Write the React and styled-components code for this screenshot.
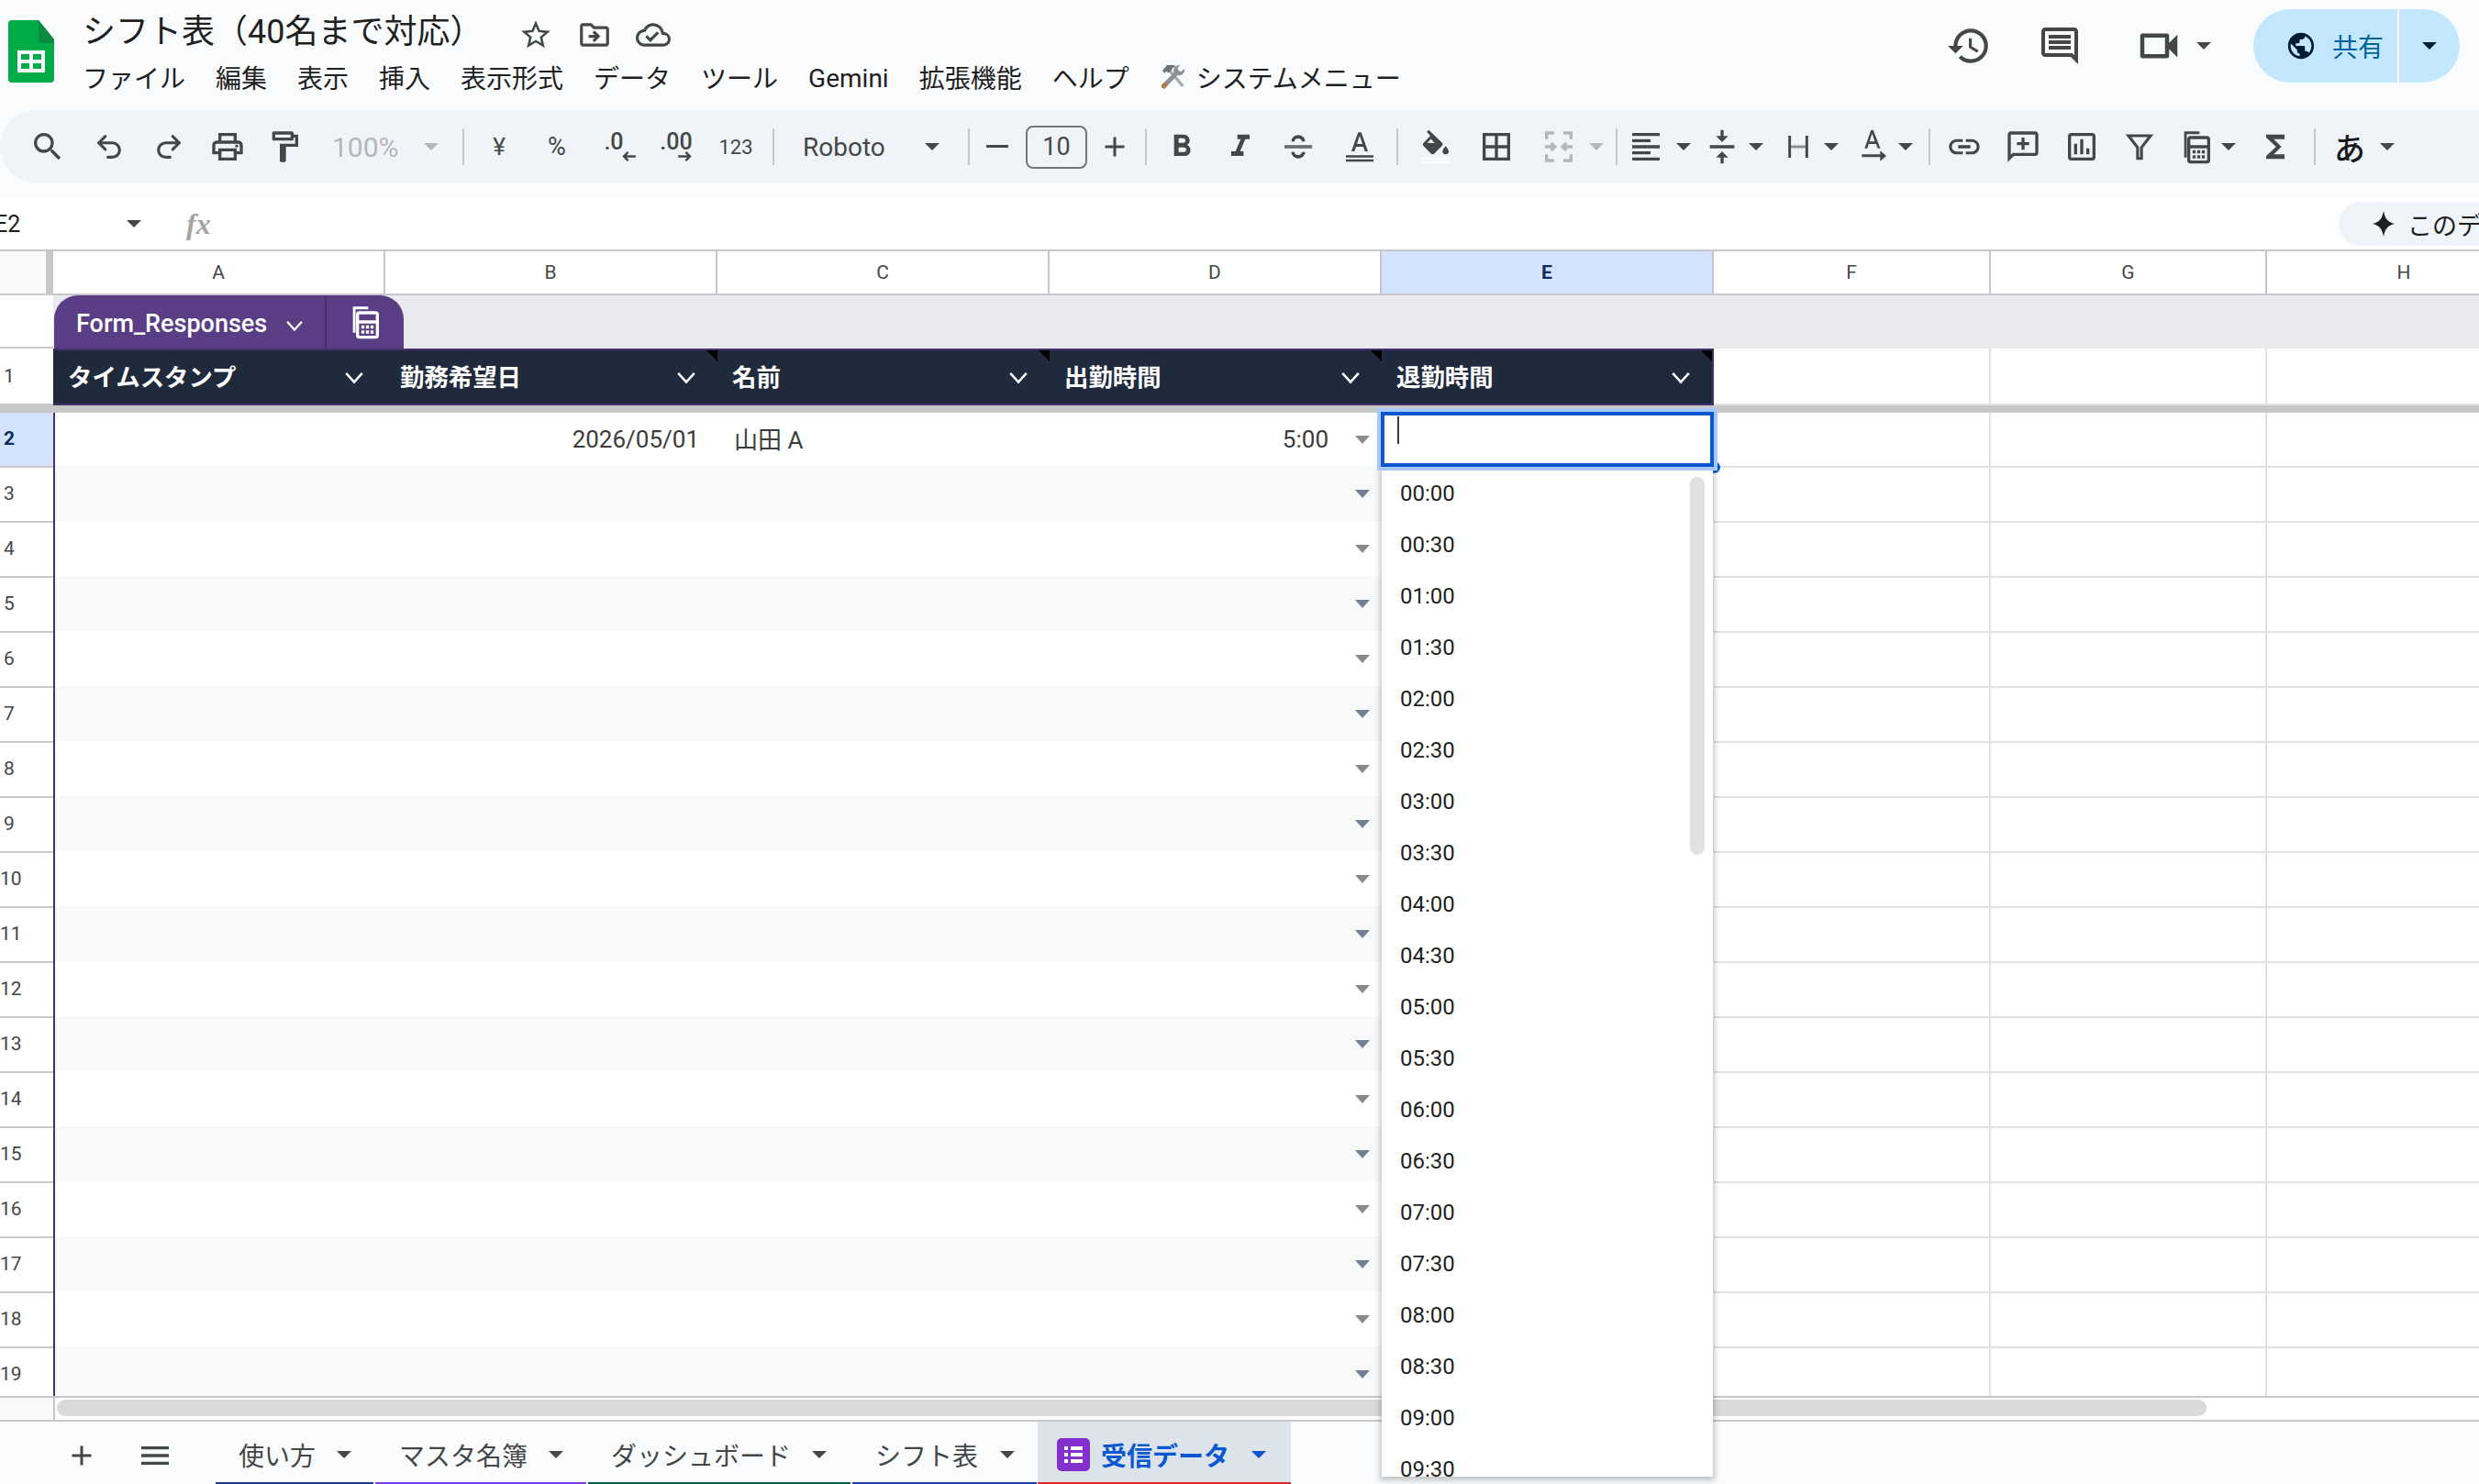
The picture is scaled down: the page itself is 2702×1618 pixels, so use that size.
import React from 'react';
import styled, { createGlobalStyle } from 'styled-components';
import { Undo2, Redo2 } from 'lucide-react';
import {
  MdSearch, MdOutlinePrint, MdOutlineFormatPaint, MdStarBorder, MdOutlineDriveFileMove,
  MdOutlineCloudDone, MdHistory, MdOutlineVideocam, MdPublic, MdFormatBold, MdFormatItalic,
  MdBorderAll, MdFormatAlignLeft, MdVerticalAlignCenter, MdLink, MdOutlineInsertChart, MdFunctions, MdAdd, MdMenu,
} from 'react-icons/md';

const FONT = `Roboto, "Noto Sans CJK JP", sans-serif`;

const Global = createGlobalStyle`
  html, body { margin: 0; padding: 0; background: #fff; }
  body { font-family: ${FONT}; color: #1f1f1f; }
  * { box-sizing: border-box; }
`;

const Page = styled.div`
  position: relative;
  width: 2702px;
  height: 1618px;
  overflow: hidden;
  background: #fff;
`;

/* ---------- top chrome ---------- */
const Chrome = styled.header`
  background: #f9fbfd;
  height: 216px;
`;
const TopBar = styled.div`
  display: flex;
  height: 120px;
  padding: 0 21px 0 9px;
`;
const Logo = styled.svg`
  width: 50px;
  height: 68px;
  margin-top: 22px;
  flex-shrink: 0;
`;
const Titles = styled.div`
  margin-left: 31px;
  padding-top: 13px;
`;
const TitleRow = styled.div`
  display: flex;
  align-items: center;
  height: 44px;
`;
const DocTitle = styled.div`
  width: 462px;
  font-size: 36px;
  line-height: 44px;
  color: #1f1f1f;
  white-space: nowrap;
`;
const TitleIcon = styled.div`
  width: 64px;
  display: flex;
  justify-content: center;
  align-items: center;
  color: #444746;
  margin-top: 5px;
`;
const MenuBar = styled.nav`
  display: flex;
  gap: 33px;
  margin-top: 5px;
  height: 44px;
  align-items: center;
`;
const MenuItem = styled.span`
  font-size: 28px;
  color: #1f1f1f;
  white-space: nowrap;
  display: flex;
  align-items: center;
  gap: 12px;
  padding-top: ${p => (p.$latin ? 3 : 0)}px;
`;
const Actions = styled.div`
  margin-left: auto;
  display: flex;
  align-items: center;
  height: 80px;
  margin-top: 10px;
`;
const ActionBtn = styled.div`
  width: ${p => p.$w}px;
  margin-right: ${p => p.$mr}px;
  display: flex;
  justify-content: center;
  align-items: center;
  color: #444746;
`;
const Share = styled.div`
  display: flex;
  align-items: center;
  width: 225px;
  height: 80px;
  border-radius: 40px;
  background: #c2e7ff;
  color: #001d35;
`;
const ShareMain = styled.div`
  display: flex;
  align-items: center;
  width: 159px;
  height: 100%;
  padding-left: 35px;
  gap: 17px;
  border-right: 2px solid #f9fbfd;
`;
const ShareLabel = styled.span`
  font-size: 28px;
  color: #00639b;
`;
const ShareCaret = styled.div`
  flex: 1;
  display: flex;
  justify-content: center;
`;

const Caret = styled.i`
  display: block;
  flex-shrink: 0;
  width: 0;
  height: 0;
  border-left: ${p => p.$s || 8}px solid transparent;
  border-right: ${p => p.$s || 8}px solid transparent;
  border-top: ${p => p.$s || 8}px solid ${p => p.$c || '#444746'};
`;

/* ---------- toolbar ---------- */
const Toolbar = styled.div`
  display: flex;
  align-items: center;
  height: 80px;
  padding-left: 20px;
  background: #f0f4f9;
  border-radius: 40px 0 0 40px;
`;
const Tool = styled.div`
  flex-shrink: 0;
  width: ${p => p.$w}px;
  margin-left: ${p => p.$ml || 0}px;
  height: 56px;
  display: flex;
  justify-content: center;
  align-items: center;
  color: #444746;
  font-size: ${p => p.$fs || 24}px;
`;
const Sep = styled.div`
  flex-shrink: 0;
  width: 2px;
  height: 40px;
  margin-left: ${p => p.$ml || 0}px;
  background: #c7c7c7;
`;
const ZoomBox = styled.div`
  flex-shrink: 0;
  width: 166px;
  display: flex;
  align-items: center;
  padding-left: 24px;
  gap: 27px;
  font-size: 30px;
  color: #b4b7ba;
`;
const FontBox = styled.div`
  flex-shrink: 0;
  width: 211px;
  display: flex;
  align-items: center;
  padding-left: 31px;
  font-size: 28px;
  color: #444746;
  justify-content: space-between;
  padding-right: 31px;
`;
const SizeBox = styled.div`
  flex-shrink: 0;
  width: 67px;
  height: 47px;
  margin-left: 1px;
  border: 2px solid #747775;
  border-radius: 8px;
  display: flex;
  align-items: center;
  justify-content: center;
  font-size: 27px;
  color: #444746;
`;
const DecGlyph = styled.div`
  display: flex;
  flex-direction: column;
  align-items: flex-end;
  font-size: 25px;
  line-height: 24px;
  font-weight: 500;
  color: #444746;
  margin-top: -2px;
  svg { margin-right: ${p => p.$push || 0}px; margin-top: -2px; }
`;
const ImeGlyph = styled.span`
  font-size: 34px;
  font-weight: 500;
  color: #1a1a1a;
`;

/* ---------- formula bar ---------- */
const FormulaBar = styled.div`
  display: flex;
  align-items: center;
  height: 56px;
  background: #fff;
`;
const NameBox = styled.div`
  width: 144px;
  margin-left: -6px;
  font-size: 25px;
  color: #1f1f1f;
  flex-shrink: 0;
`;
const FxGlyph = styled.span`
  margin-left: 49px;
  font-family: "Liberation Serif", serif;
  font-style: italic;
  font-weight: 700;
  font-size: 32px;
  color: #a3a3a3;
`;
const AskPill = styled.div`
  margin-left: auto;
  margin-right: -10px;
  width: 163px;
  height: 48px;
  border-radius: 24px 0 0 24px;
  background: #f0f4f9;
  display: flex;
  align-items: center;
  padding-left: 37px;
  gap: 14px;
  font-size: 27px;
  color: #1f1f1f;
  white-space: nowrap;
  flex-shrink: 0;
`;

/* ---------- sheet ---------- */
const Sheet = styled.section`
  background: #fff;
`;
const LINE = '#c7c7c7';
const GRID = '#e1e1e1';
const ColHeaders = styled.div`
  display: flex;
  height: 50px;
  border-top: 2px solid ${LINE};
  border-bottom: 2px solid ${LINE};
`;
const Corner = styled.div`
  width: 58px;
  flex-shrink: 0;
  background: #f8f9fa;
  border-right: 8px solid ${LINE};
`;
const ColHead = styled.div`
  flex-shrink: 0;
  width: ${p => p.$w}px;
  display: flex;
  align-items: center;
  justify-content: center;
  font-size: 21px;
  font-weight: ${p => (p.$on ? 700 : 400)};
  color: ${p => (p.$on ? '#0b2a5e' : '#444746')};
  background: ${p => (p.$on ? '#d3e3fd' : '#fff')};
  border-right: 2px solid ${LINE};
`;
const TabBand = styled.div`
  display: flex;
  height: 58px;
`;
const Gutter = styled.div`
  width: 58px;
  flex-shrink: 0;
  background: ${p => (p.$on ? '#d3e3fd' : '#fff')};
  border-bottom: 2px solid ${LINE};
  display: flex;
  align-items: center;
  padding-left: ${p => (p.$wide ? 0 : 4)}px;
  padding-bottom: ${p => (p.$data ? 2 : 0)}px;
  font-size: 21px;
  font-weight: ${p => (p.$on ? 700 : 400)};
  color: ${p => (p.$on ? '#0b2a5e' : '#444746')};
`;
const Band = styled.div`
  flex: 1;
  background: #e8eaed;
`;
const TableTab = styled.div`
  display: flex;
  width: 381px;
  height: 58px;
  margin-left: 1px;
  background: #5a3e85;
  border-radius: 26px 26px 0 0;
  color: #fff;
`;
const TableName = styled.div`
  width: 297px;
  display: flex;
  align-items: center;
  padding: 3px 0 0 24px;
  gap: 20px;
  font-size: 27px;
  font-weight: 500;
  border-right: 2px solid #472e6e;
`;
const TableAction = styled.div`
  flex: 1;
  display: flex;
  align-items: center;
  justify-content: center;
`;
const HeaderRow = styled.div`
  display: flex;
  height: 62px;
`;
const HeadCell = styled.div`
  position: relative;
  flex-shrink: 0;
  width: ${p => p.$w}px;
  display: flex;
  align-items: center;
  padding: 0 23px 4px 16px;
  background: #1f2a3d;
  border-top: 2px solid #472e6e;
  border-bottom: 2px solid #472e6e;
  border-right: ${p => (p.$last ? '2px solid #472e6e' : 'none')};
  color: #fff;
  font-size: 26.4px;
  font-weight: 700;
  justify-content: space-between;
  white-space: nowrap;
`;
const CornerMark = styled.i`
  position: absolute;
  top: 0;
  right: 0;
  width: 0;
  height: 0;
  border-top: 12px solid #000;
  border-left: 12px solid transparent;
`;
const GridCell = styled.div`
  flex-shrink: 0;
  width: ${p => p.$w}px;
  background: #fff;
  border-right: 2px solid ${GRID};
  border-bottom: 2px solid ${GRID};
`;
const Freeze = styled.div`
  height: 8px;
  background: ${LINE};
`;
const Rows = styled.div`
  height: 1072px;
  overflow: hidden;
`;
const Row = styled.div`
  display: flex;
  height: 60px;
`;
/* table cells reach 2px above their row: the banding has no grid line of its own */
const Cell = styled.div`
  flex-shrink: 0;
  width: ${p => p.$w}px;
  margin-top: ${p => (p.$first ? 0 : -2)}px;
  display: flex;
  align-items: center;
  justify-content: ${p => (p.$end ? 'flex-end' : 'flex-start')};
  padding: ${p => (p.$end ? '0 20px 2px 0' : '0 0 6px 18px')};
  background: ${p => (p.$band ? '#f8f9fa' : '#fff')};
  border-left: ${p => (p.$edge ? '2px solid #472e6e' : 'none')};
  font-size: 26px;
  color: #3c3c3c;
  white-space: nowrap;
`;
const Pick = styled(Cell)`
  justify-content: flex-end;
  padding: 0 13px 2px 0;
  gap: 29px;
`;
const Arrow = styled.i`
  display: block;
  width: 0;
  height: 0;
  margin-top: 1px;
  border-left: 8px solid transparent;
  border-right: 8px solid transparent;
  border-top: 9px solid ${p => (p.$band ? '#6e8094' : '#8a8a8a')};
`;
const ScrollStrip = styled.div`
  position: relative;
  display: flex;
  height: 28px;
  background: #fff;
  border-top: 2px solid ${LINE};
  border-bottom: 2px solid ${LINE};
`;
const ScrollCorner = styled.div`
  width: 60px;
  flex-shrink: 0;
  background: #f8f9fa;
  border-right: 2px solid ${LINE};
`;
const ScrollThumb = styled.div`
  width: 2343px;
  height: 18px;
  margin: 2px 0 0 2px;
  border-radius: 9px;
  background: #dadada;
`;

/* ---------- overlay: active cell + validation list ---------- */
const ActiveCell = styled.div`
  position: absolute;
  left: 1505px;
  top: 449px;
  width: 363px;
  height: 60px;
  background: #fff;
  border: 4px solid #0b57d0;
  box-shadow: 0 0 0 4px #a8c7fa;
  z-index: 3;
`;
const TextCaret = styled.i`
  position: absolute;
  left: 14px;
  top: 1px;
  width: 2px;
  height: 30px;
  background: #3c3c3c;
`;
const Handle = styled.i`
  position: absolute;
  left: 1862px;
  top: 503px;
  width: 13px;
  height: 13px;
  border-radius: 50%;
  background: #0b57d0;
  z-index: 2;
`;
const Dropdown = styled.div`
  position: absolute;
  left: 1506px;
  top: 510px;
  width: 361px;
  height: 1100px;
  overflow: hidden;
  background: #fff;
  box-shadow: 0 2px 6px 2px rgba(60, 64, 67, 0.3);
  z-index: 2;
`;
const Option = styled.div`
  height: 56px;
  display: flex;
  align-items: center;
  padding-left: 20px;
  font-size: 24px;
  color: #1f1f1f;
`;
const ListThumb = styled.i`
  position: absolute;
  top: 10px;
  right: 9px;
  width: 16px;
  height: 412px;
  border-radius: 8px;
  background: #e1e1e1;
`;

/* ---------- sheet tabs ---------- */
const TabBar = styled.footer`
  display: flex;
  height: 68px;
  background: #f9fbfd;
  padding-left: 60px;
`;
const BarBtn = styled.div`
  width: ${p => p.$w}px;
  display: flex;
  align-items: center;
  justify-content: center;
  color: #444746;
  flex-shrink: 0;
  padding-top: 6px;
`;
const TabItem = styled.div`
  position: relative;
  flex-shrink: 0;
  display: flex;
  align-items: center;
  height: 68px;
  width: ${p => p.$w}px;
  margin-left: ${p => p.$ml}px;
  padding-left: ${p => p.$pl}px;
  padding-top: 4px;
  gap: ${p => p.$gap}px;
  font-size: 28px;
  font-weight: ${p => (p.$on ? 700 : 400)};
  color: ${p => (p.$on ? '#0b57d0' : '#444746')};
  background: ${p => (p.$on ? '#dde3ea' : 'transparent')};
  white-space: nowrap;
  &::after {
    content: '';
    position: absolute;
    left: 0;
    right: 0;
    bottom: 0;
    height: 2px;
    background: ${p => p.$line};
  }
`;
const TabBadgeLabel = styled.span`
  margin-left: -12px;
`;

/* ---------- drawn icons ---------- */
const SheetsLogo = () => (
  <Logo viewBox="0 0 50 68">
    <path d="M4 0h29l17 21v43a4 4 0 0 1-4 4H4a4 4 0 0 1-4-4V4a4 4 0 0 1 4-4z" fill="#00ac47" />
    <path d="M33 0l17 21v4H37a4 4 0 0 1-4-4z" fill="#0a8a3c" />
    <path d="M10 33h30v24H10z M14 37v6h9v-6z M27 37v6h9v-6z M14 47v6h9v-6z M27 47v6h9v-6z" fill="#fff" fillRule="evenodd" />
  </Logo>
);
const Ico = ({ size = 40, children, stroke, fill = 'currentColor', sw }) => (
  <svg width={size} height={size} viewBox="0 0 24 24" fill={fill} stroke={stroke} strokeWidth={sw}>{children}</svg>
);
const CommentIcon = () => (
  <Ico size={48}>
    <path d="M20 2H4c-1.100 0-2 .9-2 2v12c0 1.100.9 2 2 2h14l4 4V4c0-1.100-.9-2-2-2zm0 15.170L18.830 16H4V4h16v13.170z" />
    <path d="M6 12h12v2H6zM6 9h12v2H6zM6 6h12v2H6z" />
  </Ico>
);
const StrikeIcon = () => (
  <Ico fill="none" stroke="currentColor" sw={2.200}>
    <path d="M8.500 8.500a3.500 3 0 0 1 7 0" />
    <path d="M3 12h18" stroke="#6a6c6e" />
    <path d="M8.500 15.500a3.500 3 0 0 0 7 0" />
  </Ico>
);
const TextColor = () => (
  <Ico>
    <path d="M11 2.500 6.600 15h2l1-3h4.800l1 3h2L13 2.500h-2zm-.8 7.700L12 4.800l1.800 5.400h-3.600z" />
    <path d="M3 17.500h18v1.600H3zM3 20.200h18v1.600H3z" />
  </Ico>
);
const FillColor = () => (
  <Ico>
    <path d="M8 1 6.600 2.200 9 4.800 4.600 9.400c-.6.6-.6 1.600 0 2.100l4.800 5c.6.6 1.600.6 2.200 0l5-5.100c.6-.6.6-1.500 0-2.100L8 1zm3.900 8.600-5-.1 2.500-2.600 2.500 2.700z" />
    <path d="M19 11.500s-2 2.200-2 3.500a2 2 0 0 0 4 0c0-1.300-2-3.500-2-3.500z" />
    <path d="M3 19h18v1.400H3zM3 21.400h18v1.400H3z" fill="#fff" />
  </Ico>
);
const MergeIcon = () => (
  <Ico fill="none" stroke="#b4b7ba" sw={2}>
    <path d="M9 3H4v4M15 3h5v4M9 21H4v-4M15 21h5v-4" />
    <path d="M3 12h6M7 9.500 9.500 12 7 14.500M21 12h-6M17 9.500 14.500 12l2.500 2.500" />
  </Ico>
);
const WrapIcon = () => (
  <Ico size={32} fill="none" stroke="currentColor" sw={2.200}>
    <path d="M5 3v18M19 3v18" />
    <path d="M6 12h12" stroke="#8d8f91" />
  </Ico>
);
const RotateIcon = () => (
  <Ico>
    <path d="M11 1 6.800 13h1.800l.9-2.800h4.900l.9 2.800h1.800L12.400 1H11zm-1 7.600 1.700-5.300 1.700 5.300H10z" />
    <path d="M5 17h12v-2.500l4 3.500-4 3.500V18.800H5z" />
  </Ico>
);
const AddComment = () => (
  <Ico>
    <path d="M20 2H4c-1.100 0-2 .9-2 2v18l4-4h14c1.100 0 2-.9 2-2V4c0-1.100-.9-2-2-2zm0 14H5.200L4 17.200V4h16v12z" />
    <path d="M11 6h2v3h3v2h-3v3h-2v-3H8V9h3z" />
  </Ico>
);
const FilterIcon = () => (
  <Ico size={34} fill="none" stroke="currentColor" sw={2.200}>
    <path d="M3.500 3.500h17l-7 9v8.500h-3v-8.500z" />
  </Ico>
);
const CalcIcon = ({ color = 'currentColor' }) => (
  <Ico>
    <g fill={color}>
      <path d="M4 2h10v1.700H5.700V19H4V2z" />
      <path fillRule="evenodd" d="M8 5h11c1.100 0 2 .9 2 2v14c0 1.100-.9 2-2 2H8c-1.100 0-2-.9-2-2V7c0-1.100.9-2 2-2zm0 2v4h11V7H8zm0 6v8h11v-8H8z" />
      <path d="M9.500 14.300h2v2h-2zM12.500 14.300h2v2h-2zM15.500 14.300h2v2h-2zM9.500 17.600h2v2h-2zM12.500 17.600h2v2h-2zM15.500 17.600h2v2h-2z" />
    </g>
  </Ico>
);
const ChevronSvg = styled.svg`
  flex-shrink: 0;
  margin-top: 6px;
`;
const Chevron = ({ size = 22 }) => (
  <ChevronSvg width={size} height={size * 0.62} viewBox="0 0 22 14" fill="none" stroke="#fff" strokeWidth="2.600">
    <path d="M2 2l9 10 9-10" />
  </ChevronSvg>
);
const DecArrow = ({ dir }) => (
  <svg width="17" height="11" viewBox="0 0 18 12" fill="none" stroke="#444746" strokeWidth="2.600">
    {dir === 'l' ? <path d="M17 6H3M8 1 3 6l5 5" /> : <path d="M1 6h14M10 1l5 5-5 5" />}
  </svg>
);
const Tools = () => (
  <svg width="28" height="28" viewBox="0 0 28 28">
    <path d="M7 5 24 25l2.500-2.300L9.500 3z" fill="#a7adb2" />
    <path d="M3 7l5-6h8l1.500 2-3 .5-1.500 3-3.500 3L7 7.500 5.500 10z" fill="#6d7377" />
    <path d="M21 1a6 6 0 0 0-5.500 8L2.500 22.500a2.500 2.500 0 0 0 3.500 3.500L19.500 12a6 6 0 0 0 7.500-7l-3.500 3-3-1-1-3 3-3z" fill="#8b9196" />
    <path d="M2.500 22.500a2.500 2.500 0 0 0 3.500 3.500l3-3-3.500-3.500z" fill="#b07b43" />
  </svg>
);
const Spark = () => (
  <svg width="24" height="28" viewBox="0 0 24 28"><path d="M12 0c1.500 8 4 12 12 14-8 2-10.500 6-12 14-1.500-8-4-12-12-14 8-2 10.500-6 12-14z" fill="#1f1f1f" /></svg>
);
const FormsBadge = () => (
  <svg width="36" height="36" viewBox="0 0 36 36">
    <rect width="36" height="36" rx="5" fill="#8430ce" />
    <path d="M8 9h4v4H8zM15 9h13v4H15zM8 16h4v4H8zM15 16h13v4H15zM8 23h4v4H8zM15 23h13v4H15z" fill="#fff" />
  </svg>
);

const COLS = [['A', 362], ['B', 362], ['C', 362], ['D', 362], ['E', 362], ['F', 302], ['G', 301], ['H', 300]];
const TIMES = Array.from({ length: 20 }, (_, i) => `${String(Math.floor(i / 2)).padStart(2, '0')}:${i % 2 ? '30' : '00'}`);
const ROW_NUMS = Array.from({ length: 18 }, (_, i) => i + 2);

export default function App() {
  return (
    <Page>
      <Global />
      <Chrome>
        <TopBar>
          <SheetsLogo />
          <Titles>
            <TitleRow>
              <DocTitle>シフト表（40名まで対応）</DocTitle>
              <TitleIcon><MdStarBorder size={38} /></TitleIcon>
              <TitleIcon><MdOutlineDriveFileMove size={38} /></TitleIcon>
              <TitleIcon><MdOutlineCloudDone size={38} /></TitleIcon>
            </TitleRow>
            <MenuBar>
              <MenuItem>ファイル</MenuItem>
              <MenuItem>編集</MenuItem>
              <MenuItem>表示</MenuItem>
              <MenuItem>挿入</MenuItem>
              <MenuItem>表示形式</MenuItem>
              <MenuItem>データ</MenuItem>
              <MenuItem>ツール</MenuItem>
              <MenuItem $latin>Gemini</MenuItem>
              <MenuItem>拡張機能</MenuItem>
              <MenuItem>ヘルプ</MenuItem>
              <MenuItem><Tools />システムメニュー</MenuItem>
            </MenuBar>
          </Titles>
          <Actions>
            <ActionBtn $w={60} $mr={39}><MdHistory size={50} /></ActionBtn>
            <ActionBtn $w={60} $mr={50}><CommentIcon /></ActionBtn>
            <ActionBtn $w={56} $mr={14}><MdOutlineVideocam size={54} /></ActionBtn>
            <ActionBtn $w={14} $mr={47}><Caret /></ActionBtn>
            <Share>
              <ShareMain>
                <MdPublic size={34} />
                <ShareLabel>共有</ShareLabel>
              </ShareMain>
              <ShareCaret><Caret $c="#001d35" /></ShareCaret>
            </Share>
          </Actions>
        </TopBar>
        <Toolbar>
          <Tool $w={64}><MdSearch size={40} /></Tool>
          <Tool $w={70}><Undo2 size={34} strokeWidth={2.200} /></Tool>
          <Tool $w={60}><Redo2 size={34} strokeWidth={2.200} /></Tool>
          <Tool $w={68}><MdOutlinePrint size={40} /></Tool>
          <Tool $w={56}><MdOutlineFormatPaint size={40} /></Tool>
          <ZoomBox>100%<Caret $c="#b4b7ba" /></ZoomBox>
          <Sep />
          <Tool $w={76} $fs={26}>¥</Tool>
          <Tool $w={50} $fs={27}>%</Tool>
          <Tool $w={74}><DecGlyph $push={-14}>.0<DecArrow dir="l" /></DecGlyph></Tool>
          <Tool $w={62}><DecGlyph>.00<DecArrow dir="r" /></DecGlyph></Tool>
          <Tool $w={68} $fs={22}>123</Tool>
          <Sep $ml={6} />
          <FontBox>Roboto<Caret /></FontBox>
          <Sep />
          <Tool $w={60}><svg width="24" height="4"><rect width="24" height="3" fill="#444746" /></svg></Tool>
          <SizeBox>10</SizeBox>
          <Tool $w={60}><MdAdd size={36} /></Tool>
          <Sep $ml={3} />
          <Tool $w={76}><MdFormatBold size={40} /></Tool>
          <Tool $w={52}><MdFormatItalic size={40} /></Tool>
          <Tool $w={74}><StrikeIcon /></Tool>
          <Tool $w={60}><TextColor /></Tool>
          <Sep $ml={10} />
          <Tool $w={80}><FillColor /></Tool>
          <Tool $w={54}><MdBorderAll size={40} /></Tool>
          <Tool $w={70} $ml={6}><MergeIcon /></Tool>
          <Tool $w={12}><Caret $c="#b4b7ba" /></Tool>
          <Sep $ml={15} />
          <Tool $w={62}><MdFormatAlignLeft size={40} /></Tool>
          <Tool $w={20}><Caret /></Tool>
          <Tool $w={64}><MdVerticalAlignCenter size={40} /></Tool>
          <Tool $w={10}><Caret /></Tool>
          <Tool $w={62} $ml={10}><WrapIcon /></Tool>
          <Tool $w={10}><Caret /></Tool>
          <Tool $w={60} $ml={10}><RotateIcon /></Tool>
          <Tool $w={12}><Caret /></Tool>
          <Sep $ml={19} />
          <Tool $w={74}><MdLink size={40} /></Tool>
          <Tool $w={54}><AddComment /></Tool>
          <Tool $w={74}><MdOutlineInsertChart size={40} /></Tool>
          <Tool $w={52}><FilterIcon /></Tool>
          <Tool $w={60} $ml={6}><CalcIcon /></Tool>
          <Tool $w={10}><Caret /></Tool>
          <Tool $w={80} $ml={6}><MdFunctions size={40} /></Tool>
          <Sep $ml={2} />
          <Tool $w={74}><ImeGlyph>あ</ImeGlyph></Tool>
          <Tool $w={8}><Caret /></Tool>
        </Toolbar>
      </Chrome>

      <FormulaBar>
        <NameBox>E2</NameBox>
        <Caret />
        <FxGlyph>fx</FxGlyph>
        <AskPill><Spark />このデ</AskPill>
      </FormulaBar>

      <Sheet>
        <ColHeaders>
          <Corner />
          {COLS.map(([k, w]) => <ColHead key={k} $w={w} $on={k === 'E'}>{k}</ColHead>)}
        </ColHeaders>
        <TabBand>
          <Gutter />
          <Band>
            <TableTab>
              <TableName>Form_Responses<Chevron size={20} /></TableName>
              <TableAction><CalcIcon color="#fff" /></TableAction>
            </TableTab>
          </Band>
        </TabBand>
        <HeaderRow>
          <Gutter>1</Gutter>
          <HeadCell $w={362}>タイムスタンプ<Chevron /></HeadCell>
          <HeadCell $w={362}>勤務希望日<Chevron /><CornerMark /></HeadCell>
          <HeadCell $w={362}>名前<Chevron /><CornerMark /></HeadCell>
          <HeadCell $w={362}>出勤時間<Chevron /><CornerMark /></HeadCell>
          <HeadCell $w={362} $last>退勤時間<Chevron /><CornerMark /></HeadCell>
          <GridCell $w={302} />
          <GridCell $w={301} />
          <GridCell $w={300} />
        </HeaderRow>
        <Freeze />
        <Rows>
          {ROW_NUMS.map(n => {
            const band = n % 2 === 1;
            const first = n === 2;
            return (
              <Row key={n}>
                <Gutter $on={first} $wide={n >= 10} $data>{n}</Gutter>
                <Cell $w={362} $band={band} $first={first} $edge />
                <Cell $w={362} $band={band} $first={first} $end>{first ? '2026/05/01' : ''}</Cell>
                <Cell $w={362} $band={band} $first={first}>{first ? '山田 A' : ''}</Cell>
                <Pick $w={362} $band={band} $first={first}>{first ? '5:00' : ''}<Arrow $band={band} /></Pick>
                <Cell $w={362} $band={band} $first={first} />
                <GridCell $w={302} />
                <GridCell $w={301} />
                <GridCell $w={300} />
              </Row>
            );
          })}
        </Rows>
        <ScrollStrip>
          <ScrollCorner />
          <ScrollThumb />
        </ScrollStrip>
      </Sheet>

      <TabBar>
        <BarBtn $w={58}><MdAdd size={36} /></BarBtn>
        <BarBtn $w={102}><MdMenu size={40} /></BarBtn>
        <TabItem $w={172} $ml={15} $pl={25} $gap={23} $line="#1e3a8a">使い方<Caret /></TabItem>
        <TabItem $w={230} $ml={2} $pl={26} $gap={23} $line="#7c3aed">マスタ名簿<Caret /></TabItem>
        <TabItem $w={286} $ml={2} $pl={25} $gap={23} $line="#065f46">ダッシュボード<Caret /></TabItem>
        <TabItem $w={201} $ml={2} $pl={25} $gap={24} $line="#1e40af">シフト表<Caret /></TabItem>
        <TabItem $w={276} $ml={1} $pl={21} $gap={24} $on $line="#dc2626">
          <FormsBadge />
          <TabBadgeLabel>受信データ</TabBadgeLabel>
          <Caret $c="#0b57d0" />
        </TabItem>
      </TabBar>

      <ActiveCell><TextCaret /></ActiveCell>
      <Handle />
      <Dropdown>
        {TIMES.map(t => <Option key={t}>{t}</Option>)}
        <ListThumb />
      </Dropdown>
    </Page>
  );
}
